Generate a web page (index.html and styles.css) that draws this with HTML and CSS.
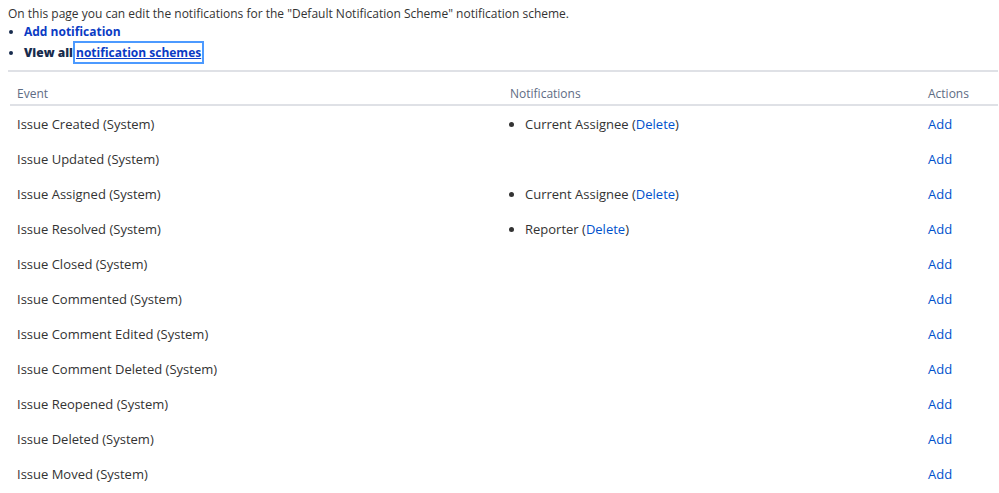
FILE: index.html
```html
<!DOCTYPE html>
<html>
<head>
<meta charset="utf-8">
<link rel="stylesheet" href="styles.css">
</head>
<body>
<div class="page">
  <p class="intro">On this page you can edit the notifications for the "Default Notification Scheme" notification scheme.</p>
  <ul class="ops">
    <li><a class="strong-link" href="#">Add notification</a></li>
    <li><b>View all</b> <a class="strong-link focused" href="#">notification schemes</a></li>
  </ul>
  <div class="divider"></div>
  <table class="scheme">
    <colgroup>
      <col class="c-event"><col class="c-notif"><col class="c-act">
    </colgroup>
    <thead>
      <tr><th>Event</th><th>Notifications</th><th>Actions</th></tr>
    </thead>
    <tbody>
      <tr><td>Issue Created (System)</td><td><ul class="notifs"><li>Current Assignee (<a href="#">Delete</a>)</li></ul></td><td><a href="#">Add</a></td></tr>
      <tr><td>Issue Updated (System)</td><td></td><td><a href="#">Add</a></td></tr>
      <tr><td>Issue Assigned (System)</td><td><ul class="notifs"><li>Current Assignee (<a href="#">Delete</a>)</li></ul></td><td><a href="#">Add</a></td></tr>
      <tr><td>Issue Resolved (System)</td><td><ul class="notifs"><li>Reporter (<a href="#">Delete</a>)</li></ul></td><td><a href="#">Add</a></td></tr>
      <tr><td>Issue Closed (System)</td><td></td><td><a href="#">Add</a></td></tr>
      <tr><td>Issue Commented (System)</td><td></td><td><a href="#">Add</a></td></tr>
      <tr><td>Issue Comment Edited (System)</td><td></td><td><a href="#">Add</a></td></tr>
      <tr><td>Issue Comment Deleted (System)</td><td></td><td><a href="#">Add</a></td></tr>
      <tr><td>Issue Reopened (System)</td><td></td><td><a href="#">Add</a></td></tr>
      <tr><td>Issue Deleted (System)</td><td></td><td><a href="#">Add</a></td></tr>
      <tr><td>Issue Moved (System)</td><td></td><td><a href="#">Add</a></td></tr>
    </tbody>
  </table>
</div>
</body>
</html>
```
FILE: styles.css
```css
html, body {
  margin: 0;
  padding: 0;
  background: #fff;
}
body {
  font-family: "Open Sans", "Noto Sans", sans-serif;
  font-size: 13px;
  color: #333;
}
.page {
  padding: 5px 1px 0 8px;
}
.intro {
  margin: 0;
  font-size: 12px;
  line-height: 18px;
}
.ops {
  margin: -2px 0 0;
  padding-left: 16px;
  list-style: disc;
  font-size: 12px;
}
.ops li {
  line-height: 21px;
  font-weight: 700;
  color: #172b4d;
}
a {
  color: #0052cc;
  text-decoration: none;
}
.strong-link {
  font-weight: 700;
  color: #0a3bc4;
}
.focused {
  text-decoration: underline;
  outline: 2px solid #4c9aff;
  outline-offset: 1px;
}
.divider {
  height: 2px;
  background: #dfe1e6;
  margin-top: 7px;
}
.scheme {
  border-collapse: collapse;
  margin-left: 2px;
  width: 988px;
  table-layout: fixed;
}
.c-event { width: 493px; }
.c-notif { width: 418px; }
.c-act { width: 77px; }
.scheme th {
  text-align: left;
  font-weight: 400;
  font-size: 12px;
  line-height: 18px;
  color: #5e6c84;
  height: 31px;
  padding: 0 7px 1px;
  border-bottom: 2px solid #dfe1e6;
  vertical-align: bottom;
}
.scheme td {
  height: 35px;
  padding: 0 7px;
  vertical-align: middle;
  line-height: 20px;
}
.notifs {
  margin: 0;
  padding-left: 15px;
  list-style: disc;
}
```
